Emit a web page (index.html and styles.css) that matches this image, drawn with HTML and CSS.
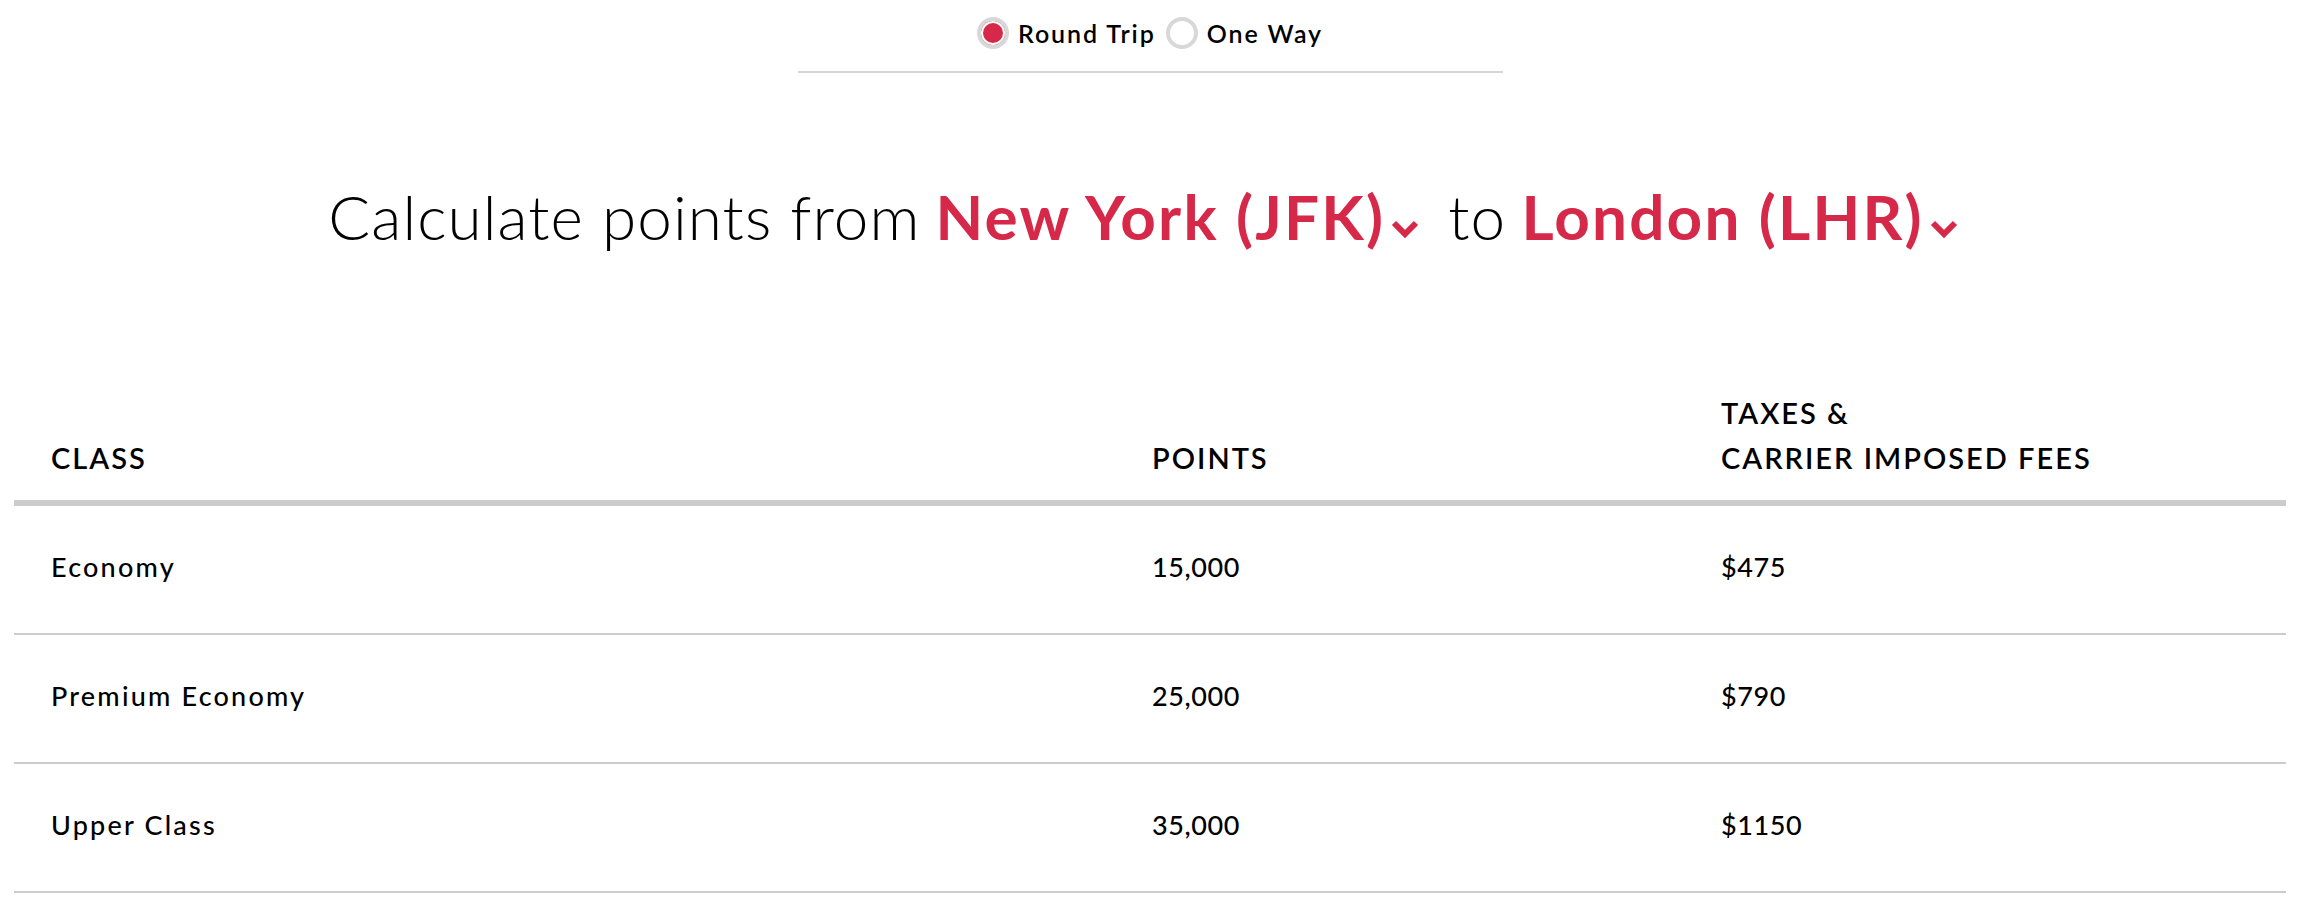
FILE: index.html
```html
<!DOCTYPE html>
<html lang="en">
<head>
<meta charset="utf-8">
<title>Calculate points</title>
<link rel="stylesheet" href="styles.css">
</head>
<body>
<main class="page">
  <div class="trip-type">
    <label class="option">
      <span class="radio radio-checked"></span>
      <span class="option-label">Round Trip</span>
    </label>
    <label class="option">
      <span class="radio"></span>
      <span class="option-label">One Way</span>
    </label>
  </div>
  <div class="divider"></div>

  <h1 class="title">
    <span class="title-light">Calculate points from</span>
    <span class="place">New York (JFK)<svg class="chev" viewBox="0 0 28 19" width="28" height="19"><polyline points="3,4 14,15 25,4" fill="none" stroke="#d62848" stroke-width="6"/></svg></span>
    <span class="title-light to">to</span>
    <span class="place">London (LHR)<svg class="chev" viewBox="0 0 28 19" width="28" height="19"><polyline points="3,4 14,15 25,4" fill="none" stroke="#d62848" stroke-width="6"/></svg></span>
  </h1>

  <div class="table">
    <div class="row head">
      <div class="cell">CLASS</div>
      <div class="cell">POINTS</div>
      <div class="cell">TAXES &amp;<br>CARRIER IMPOSED FEES</div>
    </div>
    <div class="row">
      <div class="cell">Economy</div>
      <div class="cell num">15,000</div>
      <div class="cell num">$475</div>
    </div>
    <div class="row">
      <div class="cell">Premium Economy</div>
      <div class="cell num">25,000</div>
      <div class="cell num">$790</div>
    </div>
    <div class="row">
      <div class="cell">Upper Class</div>
      <div class="cell num">35,000</div>
      <div class="cell num">$1150</div>
    </div>
  </div>
</main>
</body>
</html>
```

FILE: styles.css
```css
html, body {
  margin: 0;
  padding: 0;
  background: #ffffff;
}

body {
  font-family: Lato, "Open Sans", sans-serif;
  color: #000000;
}

.page {
  margin: 0 20px 0 14px;
  display: flex;
  flex-direction: column;
  align-items: center;
}

.trip-type {
  margin-top: 18px;
  height: 30px;
  display: flex;
  align-items: center;
  gap: 10px;
}

.option {
  display: flex;
  align-items: center;
  gap: 9px;
}

.radio {
  width: 24px;
  height: 24px;
  border: 4px solid #d8d8d8;
  border-radius: 50%;
  background: #ffffff;
  box-sizing: content-box;
  display: inline-block;
}

.radio-checked {
  background: #d62848;
  box-shadow: inset 0 0 0 2px #ffffff;
}

.option-label {
  font-size: 25px;
  font-weight: 600;
  line-height: 30px;
  letter-spacing: 1.9px;
}

.divider {
  width: 705px;
  height: 2px;
  background: #d6d6d6;
  margin-top: 23px;
}

.title {
  margin: 106px 0 0 0;
  font-size: 62px;
  line-height: 1.2;
  font-weight: 700;
  white-space: nowrap;
  padding-right: 14px;
}

.title-light {
  font-weight: 300;
  letter-spacing: 1.1px;
}

.place {
  color: #d62848;
  letter-spacing: 2.2px;
}

.chev {
  margin-left: 6px;
  vertical-align: 2px;
}

.to {
  margin-left: 14px;
}

.table {
  align-self: stretch;
  margin-top: 137px;
}

.row {
  display: grid;
  grid-template-columns: 1101px 569px 1fr;
  height: 127px;
  align-items: center;
  border-bottom: 2px solid #cccccc;
}

.row .cell {
  padding-left: 37px;
  padding-bottom: 6px;
  font-size: 27px;
  font-weight: 500;
  letter-spacing: 2.2px;
}

.row .cell.num {
  letter-spacing: 0.6px;
}

.row.head {
  height: auto;
  align-items: end;
  padding-bottom: 20px;
  border-bottom: 6px solid #cccccc;
}

.row.head .cell {
  font-size: 29px;
  font-weight: 600;
  line-height: 45px;
  letter-spacing: 2px;
  padding-bottom: 0;
}
```
